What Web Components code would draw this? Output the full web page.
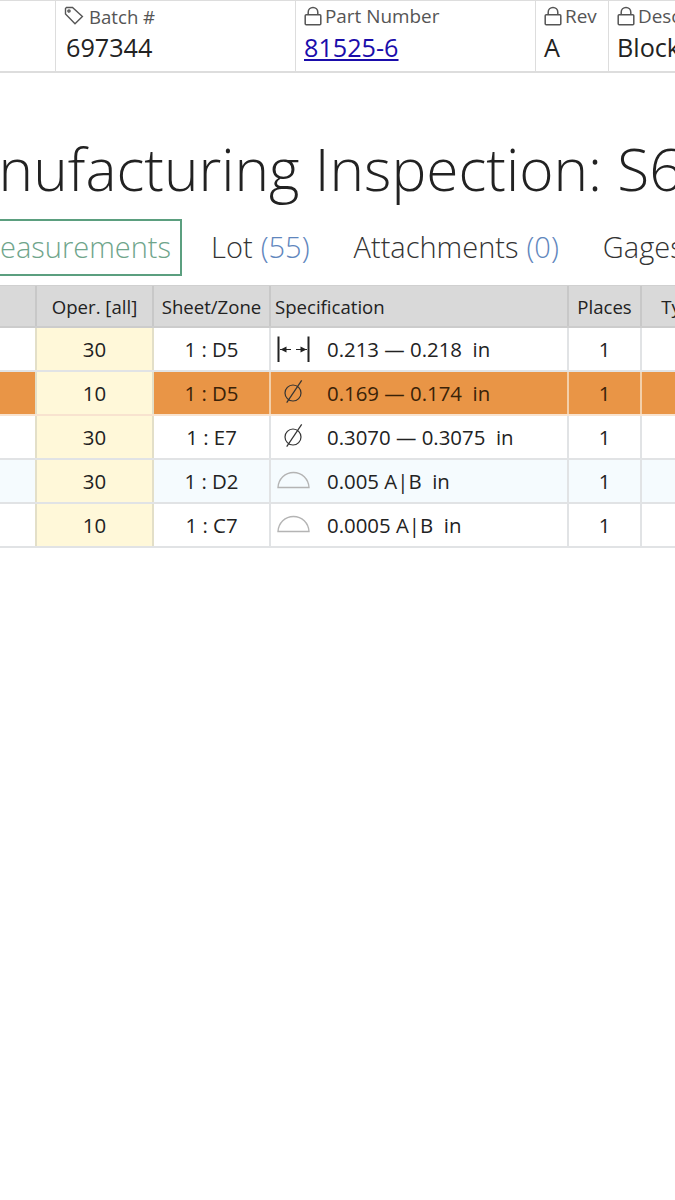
<!DOCTYPE html>
<html>
<head>
<meta charset="utf-8">
<style>
  html, body { margin: 0; padding: 0; background: #fff; }
  body { width: 675px; height: 1200px; overflow: hidden; font-family: "Open Sans", "Liberation Sans", sans-serif; color: #222; }
</style>
</head>
<body>
<info-bar>
  <info-cell icon="none"></info-cell>
  <info-cell icon="tag" label="Batch #">697344</info-cell>
  <info-cell icon="lock" label="Part Number"><a href="#">81525-6</a></info-cell>
  <info-cell icon="lock" label="Rev">A</info-cell>
  <info-cell icon="lock" label="Description">Block</info-cell>
</info-bar>
<page-title>Manufacturing Inspection: S6</page-title>
<tab-bar>
  <tab-item active>Measurements</tab-item>
  <tab-item count="(55)">Lot</tab-item>
  <tab-item count="(0)">Attachments</tab-item>
  <tab-item>Gages</tab-item>
</tab-bar>
<spec-table>
  <spec-row head>
    <span></span><span>Oper. [all]</span><span>Sheet/Zone</span><span class="l">Specification</span><span>Places</span><span>Type</span>
  </spec-row>
  <spec-row oper="30" zone="1 : D5" sym="width" spec="0.213 — 0.218&nbsp; in"></spec-row>
  <spec-row oper="10" zone="1 : D5" sym="dia" spec="0.169 — 0.174&nbsp; in" tone="hot"></spec-row>
  <spec-row oper="30" zone="1 : E7" sym="dia" spec="0.3070 — 0.3075&nbsp; in"></spec-row>
  <spec-row oper="30" zone="1 : D2" sym="arc" spec="0.005 A|B&nbsp; in" tone="pale"></spec-row>
  <spec-row oper="10" zone="1 : C7" sym="arc" spec="0.0005 A|B&nbsp; in"></spec-row>
</spec-table>

<script>
const icons = {
  none: "",
  tag: `<svg width="20" height="20" viewBox="0 0 20 20" fill="none" stroke="#555" stroke-width="1.4"><path d="M1.5 2.5 L1.5 8 L11 17.8 L18.4 10.5 L8.5 1.5 L2.5 1.5 Z"/><circle cx="5" cy="5" r="1.1"/></svg>`,
  lock: `<svg width="18" height="20" viewBox="0 0 18 20" fill="none" stroke="#555" stroke-width="1.5"><rect x="1.2" y="8.8" width="15.6" height="10" rx="1"/><path d="M4.2 8.8 V6.2 a4.8 4.8 0 0 1 9.6 0 V8.8"/></svg>`
};

const symbols = {
  width: `<svg width="34" height="28" viewBox="0 0 34 28" fill="none" stroke="#222"><path stroke-width="2" d="M2.5 1.5 V27 M32.5 1.5 V27"/><path stroke-width="1" d="M4 14.5 H15 M20 14.5 H31"/><path fill="#222" stroke="none" d="M4.5 14.5 L10.5 11.5 V17.5 Z M30.5 14.5 L24.5 11.5 V17.5 Z"/></svg>`,
  dia: `<svg width="34" height="28" viewBox="0 0 34 28" fill="none" stroke="#333" stroke-width="1.2"><circle cx="17" cy="14" r="8"/><path d="M10.7 23.7 L25.7 1.3"/></svg>`,
  arc: `<svg width="34" height="28" viewBox="0 0 34 28" fill="none" stroke="#b4b4b4" stroke-width="1.4"><path d="M2 20.5 H33 C32.5 12 26 5.5 17.5 5.5 C9 5.5 2.5 12 2 20.5 Z"/></svg>`
};

class InfoBar extends HTMLElement {
  constructor() {
    super();
    this.attachShadow({ mode: "open" }).innerHTML = `
      <style>
        :host {
          display: grid;
          grid-template-columns: 56px 240px 240px 73px 1fr;
          height: 70px;
          border-top: 1px solid #ddd;
          border-bottom: 2px solid #ddd;
          overflow: hidden;
        }
      </style>
      <slot></slot>`;
  }
}

class InfoCell extends HTMLElement {
  constructor() {
    super();
    const icon = this.getAttribute("icon");
    const label = this.getAttribute("label") || "";
    this.attachShadow({ mode: "open" }).innerHTML = `
      <style>
        :host { display: block; border-right: 1px solid #ddd; padding: 3px 0 0 8px; overflow: hidden; white-space: nowrap; }
        :host(:last-child) { border-right: 0; }
        .label { display: flex; align-items: center; gap: 3px; height: 24px; font-size: 18.9px; color: #555; }
        .label svg { flex: none; }
        :host([icon="tag"]) .label { gap: 5px; font-size: 18.6px; }
        :host([icon="tag"]) .value { padding-left: 2px; }
        .value { font-size: 25.2px; line-height: 34px; margin-top: 2px; color: #222; }
        ::slotted(a) { color: #1a0dab; text-decoration: underline; }
      </style>
      <div class="label">${icons[icon]}<span>${label}</span></div>
      <div class="value"><slot></slot></div>`;
  }
}

class PageTitle extends HTMLElement {
  constructor() {
    super();
    this.attachShadow({ mode: "open" }).innerHTML = `
      <style>
        :host { display: block; margin: 58px 0 0 -83px; font-size: 58.6px; font-weight: 300; line-height: 74px; color: #222; white-space: nowrap; }
      </style>
      <slot></slot>`;
  }
}

class TabBar extends HTMLElement {
  constructor() {
    super();
    this.attachShadow({ mode: "open" }).innerHTML = `
      <style>
        :host { display: flex; margin: 14px 0 0 -38px; height: 57px; white-space: nowrap; }
      </style>
      <slot></slot>`;
  }
}

class TabItem extends HTMLElement {
  constructor() {
    super();
    const count = this.getAttribute("count");
    this.attachShadow({ mode: "open" }).innerHTML = `
      <style>
        :host { display: flex; align-items: center; box-sizing: border-box; padding: 0 11px 2px; margin-right: 18px; font-size: 29px; font-weight: 300; color: #333; flex: none; border: 2px solid transparent; }
        :host([active]) { border-color: #5b9f7f; color: #6fa58b; padding-right: 9px; margin-right: 16px; }
        .n { color: #5f86bd; margin-left: 8px; }
      </style>
      <slot></slot>${count ? `<span class="n">${count}</span>` : ""}`;
  }
}

class SpecTable extends HTMLElement {
  constructor() {
    super();
    this.attachShadow({ mode: "open" }).innerHTML = `
      <style>
        :host { display: block; margin-top: 9px; }
      </style>
      <slot></slot>`;
  }
}

class SpecRow extends HTMLElement {
  constructor() {
    super();
    const root = this.attachShadow({ mode: "open" });
    const style = `
      <style>
        :host {
          display: grid;
          grid-template-columns: 37px 117px 117px 298px 73px 82px;
          height: 44px;
          box-sizing: border-box;
          border-bottom: 2px solid #e1e3e5;
          font-size: 20.4px;
          color: #222;
          background: #fff;
        }
        :host([tone="hot"]) { background: #e99546; border-bottom-color: #f8e3cf; color: #3a2208; }
        :host([tone="pale"]) { background: #f5fbfe; }
        :host([head]) { height: 43px; background: #d9d9d9; border-top: 1px solid #d0d0d0; border-bottom: 2px solid #ccc; font-size: 18.6px; }
        .c, ::slotted(span) { display: flex; align-items: center; justify-content: center; box-sizing: border-box; border-right: 2px solid #e1e3e5; white-space: nowrap; overflow: hidden; }
        :host([head]) ::slotted(span) { border-right-color: #c8c8c8; }
        :host([head]) ::slotted(span.l) { justify-content: flex-start; padding-left: 4px; }
        :host([tone="hot"]) .c { border-right-color: #f3cfa9; }
        .oper { background: #fff8d9; color: #222; border-right-color: #e3dfc8; }
        :host([tone="hot"]) .oper { color: #222; border-right-color: #e3dfc8; }
        .first { border-right-color: #e3dfc8; }
        :host([tone="hot"]) .first { border-right-color: #e3dfc8; }
        .spec { justify-content: flex-start; padding-left: 5px; gap: 17px; }
        .last { justify-content: flex-start; border-right: 0; }
        svg { flex: none; }
      </style>`;
    if (this.hasAttribute("head")) {
      root.innerHTML = style + `<slot></slot>`;
      return;
    }
    const a = (n) => this.getAttribute(n) || "";
    root.innerHTML = style + `
      <div class="c first"></div>
      <div class="c oper">${a("oper")}</div>
      <div class="c">${a("zone")}</div>
      <div class="c spec">${symbols[a("sym")]}<span>${a("spec")}</span></div>
      <div class="c">1</div>
      <div class="c last"></div>`;
  }
}

customElements.define("info-bar", InfoBar);
customElements.define("info-cell", InfoCell);
customElements.define("page-title", PageTitle);
customElements.define("tab-bar", TabBar);
customElements.define("tab-item", TabItem);
customElements.define("spec-table", SpecTable);
customElements.define("spec-row", SpecRow);
</script>
</body>
</html>
